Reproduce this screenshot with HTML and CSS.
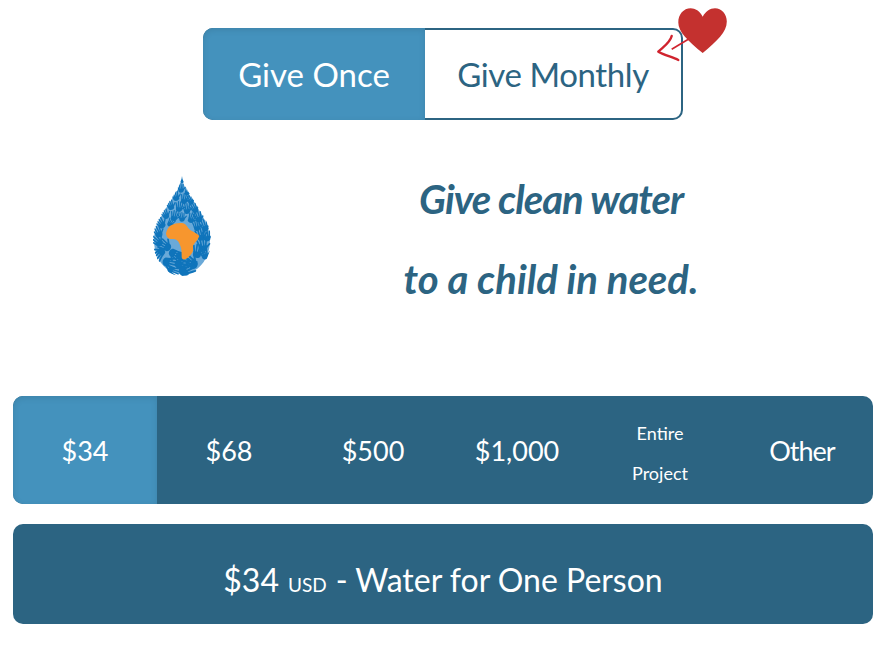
FILE: index.html
```html
<!DOCTYPE html>
<html lang="en">
<head>
    <meta charset="UTF-8">
    <title>Give clean water</title>
    <link rel="stylesheet" href="styles.css">
</head>
<body>
<div class="toggle-wrap">
    <div class="toggle">
        <div class="toggle-item active">Give Once</div>
        <div class="toggle-item monthly">Give Monthly</div>
        <svg class="heart" width="72" height="62" viewBox="0 0 72 62">
            <path d="M47.700 8.700C45 3 40 .3 35.700 .3C28.500 .3 23.300 6.500 23.300 14.500C23.300 24 33 33 47.700 45C62 33 71.800 24 71.800 13.500C71.800 6 66.500 .3 60 .3C55 .3 50.500 3.500 47.700 8.700Z" fill="#c4312f"/>
            <path d="M33.300 31.300L16.700 41.300" stroke="#d0232e" stroke-width="1.600" fill="none"/>
            <path d="M16.700 28C15 35 8 39 3.300 43.700C9 47 17 49 23.300 52" stroke="#d0232e" stroke-width="2.400" fill="none" stroke-linecap="round" stroke-linejoin="round"/>
        </svg>
    </div>
</div>

<div class="hero">
    <div class="logo">
        <svg width="58" height="100" viewBox="0 0 58 100">
            <defs>
                <clipPath id="drop">
                    <path d="M29 0C31 12 40 22 47 34C53 44 58 52 58 64C58 84 45 100 29 100C13 100 0 84 0 64C0 52 5 44 11 34C18 22 27 12 29 0Z"/>
                </clipPath>
                <g id="hand">
                    <path d="M-3.500 -2L3.500 -2L3.200 1.500C2 4 -2 4 -3.200 1.500Z" fill="#0f74bb"/>
                    <path d="M-2.700 -2L-3.800 -6.500M-1 -2L-1.200 -8M1 -2L1.300 -8M2.700 -2L3.800 -6.500M3 0L6 -2.500" stroke="#0f74bb" stroke-width="1.400" stroke-linecap="round" fill="none"/>
                </g>
            </defs>
            <path d="M29 3C31 13 40 23 46 34C52 44 57 52 57 64C57 83 45 98 29 98C13 98 1 83 1 64C1 52 6 44 12 34C18 23 27 13 29 3Z" fill="#6aa9d8"/>
            <g clip-path="url(#drop)">
                <use href="#hand" transform="translate(29 5) scale(.6)"/>
                <use href="#hand" transform="translate(28 14) rotate(-10) scale(.8)"/>
                <use href="#hand" transform="translate(34 17) rotate(20) scale(.7)"/>
                <use href="#hand" transform="translate(23 22) rotate(-20) scale(.9)"/>
                <use href="#hand" transform="translate(31 25) rotate(10) scale(.9)"/>
                <use href="#hand" transform="translate(38 26) rotate(-25) scale(.8)"/>
                <use href="#hand" transform="translate(18 31) rotate(-25) scale(.9)"/>
                <use href="#hand" transform="translate(26 33) rotate(5) scale(.9)"/>
                <use href="#hand" transform="translate(34 35) rotate(-10) scale(.9)"/>
                <use href="#hand" transform="translate(42 34) rotate(-30) scale(.9)"/>
                <use href="#hand" transform="translate(13 40) rotate(-30) scale(.9)"/>
                <use href="#hand" transform="translate(21 42) rotate(10) scale(.9)"/>
                <use href="#hand" transform="translate(29 43) rotate(-10) scale(.8)"/>
                <use href="#hand" transform="translate(38 44) rotate(20) scale(.9)"/>
                <use href="#hand" transform="translate(46 43) rotate(-20)"/>
                <use href="#hand" transform="translate(9 49) rotate(-40)"/>
                <use href="#hand" transform="translate(17 48) rotate(30) scale(.8)"/>
                <use href="#hand" transform="translate(44 52) rotate(-10) scale(.9)"/>
                <use href="#hand" transform="translate(52 52) rotate(-20)"/>
                <use href="#hand" transform="translate(6 58) rotate(-30)"/>
                <use href="#hand" transform="translate(48 61) rotate(-15) scale(1.100)"/>
                <use href="#hand" transform="translate(54 62) rotate(-10)"/>
                <use href="#hand" transform="translate(6 67) rotate(-50) scale(1.100)"/>
                <use href="#hand" transform="translate(50 72) rotate(-10) scale(1.200)"/>
                <use href="#hand" transform="translate(14 71) rotate(-60) scale(1.200)"/>
                <use href="#hand" transform="translate(44 78) rotate(10) scale(1.200)"/>
                <use href="#hand" transform="translate(52 80) rotate(-20)"/>
                <use href="#hand" transform="translate(8 76) rotate(-140) scale(1.200)"/>
                <use href="#hand" transform="translate(20 77) rotate(120) scale(1.200)"/>
                <use href="#hand" transform="translate(27 80) rotate(100) scale(1.200)"/>
                <use href="#hand" transform="translate(14 86) rotate(100) scale(1.300)"/>
                <use href="#hand" transform="translate(26 88) rotate(80) scale(1.300)"/>
                <use href="#hand" transform="translate(40 88) rotate(-60) scale(1.400)"/>
                <use href="#hand" transform="translate(31 95) rotate(60) scale(1.500)"/>
                <use href="#hand" transform="translate(18 94) rotate(110)"/>
            </g>
            <path d="M13 57.300C14 53 16 50 18.700 49C22 47 27 46.500 30.300 47.300C33 48 35 52 37 54C40 56 44 57 46.300 60C45 64 42 66 40.300 69C39.500 71 40.500 73 39.700 75.700C38 79 35 82 32 83.300C30 84 29 83 28.700 81.300C28.500 77 29 73 27 69C26 66 24.500 64 22 63.300C20 62.500 17 63.500 15.300 62.300C14 61 13 59 13 57.300Z" fill="#f7962e"/>
        </svg>
    </div>
    <div class="hero-text">
        <div class="first-line">Give clean water</div>
        <div>to a child in need.</div>
    </div>
</div>

<div class="amounts">
    <div class="amount active">$34</div>
    <div class="amount">$68</div>
    <div class="amount">$500</div>
    <div class="amount">$1,000</div>
    <div class="amount small">Entire<br>Project</div>
    <div class="amount other">Other</div>
</div>

<div class="summary">$34 <span class="usd">USD</span> - Water for One Person</div>
</body>
</html>
```

FILE: styles.css
```css
body {
    font-family: "Lato", "Liberation Sans", sans-serif;
    margin: 0;
    padding: 28px 11px 0 13px;
    background-color: #fff;
    color: #2c6482;
}

.toggle-wrap {
    display: flex;
    justify-content: center;
}

.toggle {
    position: relative;
    display: flex;
    width: 480px;
    height: 92px;
    box-sizing: border-box;
    border: 2px solid #2c6482;
    border-radius: 10px;
    font-size: 33px;
}

.toggle-item {
    flex: 1;
    display: flex;
    justify-content: center;
    align-items: center;
}

.toggle-item.monthly {
    letter-spacing: -.4px;
}

.toggle-item.active {
    flex: 0 0 222px;
    margin: -2px 0 -2px -2px;
    border-radius: 10px 0 0 10px;
    background-color: #4492bd;
    box-shadow: inset 0 2px 6px rgba(0, 0, 0, .1);
    color: #fff;
}

.heart {
    position: absolute;
    top: -22px;
    right: -46px;
}

.hero {
    display: grid;
    grid-template-columns: 338px 400px;
    align-items: start;
    height: 276px;
}

.logo {
    display: flex;
    justify-content: center;
    padding-top: 56px;
}

.hero-text {
    padding-top: 39px;
    font-size: 40px;
    font-weight: 700;
    font-style: italic;
    line-height: 80px;
    text-align: center;
}

.first-line {
    letter-spacing: -1px;
}

.amounts {
    display: grid;
    grid-template-columns: repeat(4, 144px) 142px 142px;
    height: 108px;
    border-radius: 10px;
    background-color: #2c6482;
    color: #fff;
}

.amount {
    display: flex;
    justify-content: center;
    align-items: center;
    text-align: center;
    font-size: 27px;
}

.amount.active {
    border-radius: 10px 0 0 10px;
    background-color: #4492bd;
    box-shadow: inset 0 2px 6px rgba(0, 0, 0, .1);
}

.amount.small {
    padding-top: 6px;
    font-size: 18px;
    line-height: 40px;
}

.amount.other {
    letter-spacing: -1px;
}

.summary {
    display: flex;
    justify-content: center;
    align-items: baseline;
    gap: 9px;
    margin-top: 20px;
    height: 100px;
    box-sizing: border-box;
    padding-top: 36px;
    border-radius: 10px;
    background-color: #2c6482;
    color: #fff;
    font-size: 32px;
}

.usd {
    font-size: 19px;
}
```
